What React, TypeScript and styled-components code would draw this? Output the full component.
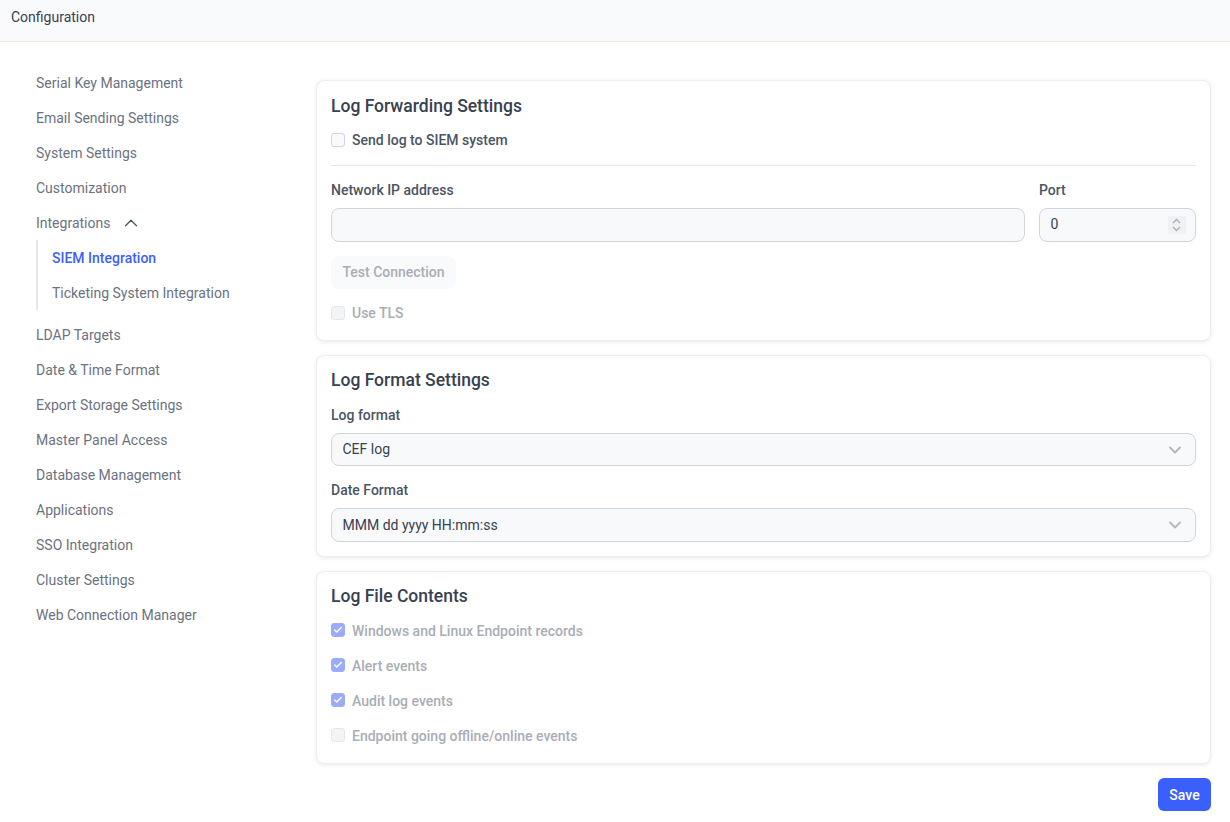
import styled, { createGlobalStyle } from "styled-components";
import { Check, ChevronDown, ChevronUp } from "lucide-react";

const GlobalStyle = createGlobalStyle`
  * {
    box-sizing: border-box;
  }
  html, body {
    margin: 0;
    background: #fff;
    font-family: Roboto, "Liberation Sans", sans-serif;
  }
`;

const Page = styled.div`
  width: 1230px;
  height: 822px;
  overflow: hidden;
`;

const Header = styled.header`
  height: 42px;
  padding: 0 11px 8px;
  display: flex;
  align-items: center;
  background: #f9fafb;
  border-bottom: 1px solid #e5e7eb;
  font-size: 14px;
  color: #374151;
`;

const Body = styled.div`
  display: flex;
`;

const Sidebar = styled.nav`
  width: 316px;
  flex: none;
  padding: 23px 0 0 36px;
`;

const NavItem = styled.div<{ $active?: boolean; $sub?: boolean }>`
  height: 35px;
  display: flex;
  align-items: center;
  gap: 10px;
  font-size: 14px;
  font-weight: ${(p) => (p.$active ? 500 : 400)};
  color: ${(p) => (p.$active ? "#3b5ffb" : "#6b7280")};
  padding-left: ${(p) => (p.$sub ? "14px" : "0")};
`;

const SubMenu = styled.div`
  border-left: 2px solid #e5e7eb;
  margin-bottom: 7px;
`;

const Main = styled.main`
  flex: 1;
  padding: 38px 19px 0 0;
  display: flex;
  flex-direction: column;
  gap: 14px;
`;

const Card = styled.section<{ $height: number; $top?: number }>`
  height: ${(p) => p.$height}px;
  padding: ${(p) => p.$top ?? 12}px 14px 0;
  background: #fff;
  border: 1px solid #eceef1;
  border-radius: 8px;
  box-shadow: 0 1px 4px rgba(0, 0, 0, 0.09);
`;

const Title = styled.h2`
  margin: 0 0 3px;
  height: 25px;
  line-height: 25px;
  font-size: 17.5px;
  font-weight: 500;
  color: #374151;
`;

const CheckRow = styled.label<{ $disabled?: boolean }>`
  height: 35px;
  display: flex;
  align-items: center;
  gap: 7px;
  font-size: 14px;
  font-weight: 500;
  color: ${(p) => (p.$disabled ? "#a9adb6" : "#4b5563")};
`;

const Box = styled.span<{ $checked?: boolean; $disabled?: boolean }>`
  width: 14px;
  height: 14px;
  flex: none;
  display: flex;
  align-items: center;
  justify-content: center;
  border-radius: 3px;
  color: #fff;
  background: ${(p) =>
    p.$checked ? "#9cacfb" : p.$disabled ? "#f3f4f6" : "#f9fafb"};
  border: 1px solid
    ${(p) => (p.$checked ? "#9cacfb" : p.$disabled ? "#e5e7eb" : "#d1d5db")};
`;

const ContentBox = styled(Box)`
  margin-bottom: 2px;
`;

const Divider = styled.hr`
  margin: 8px 0 0;
  border: 0;
  border-top: 1px solid #e5e7eb;
`;

const FieldRow = styled.div`
  display: flex;
  gap: 14px;
  margin-top: 14px;
`;

const Field = styled.div<{ $width?: number; $gap?: number }>`
  flex: ${(p) => (p.$width ? `0 0 ${p.$width}px` : "1")};
  margin-top: ${(p) => p.$gap ?? 0}px;
`;

const Label = styled.div`
  height: 20px;
  line-height: 20px;
  margin-bottom: 8px;
  font-size: 14px;
  font-weight: 500;
  color: #4b5563;
`;

const Control = styled.div<{ $height?: number }>`
  height: ${(p) => p.$height ?? 34}px;
  padding: 0 10.5px;
  display: flex;
  align-items: center;
  justify-content: space-between;
  background: #f8f9fb;
  border: 1px solid #d1d5db;
  border-radius: 8px;
  font-size: 14px;
  color: #374151;
`;

const ControlText = styled.span<{ $lift?: boolean }>`
  margin-bottom: ${(p) => (p.$lift ? "2px" : "0")};
`;

const Stepper = styled.span`
  width: 18px;
  height: 18px;
  margin-right: -1px;
  display: flex;
  flex-direction: column;
  align-items: center;
  justify-content: center;
  background: #f0f1f3;
  color: #a9adb6;
`;

const StepIcon = styled.svg`
  width: 9px;
  height: 6px;
  margin: 1px 0;
`;

const SelectIcon = styled(ChevronDown)`
  color: #b4b8bf;
`;

const TestButton = styled.button`
  display: block;
  width: 125px;
  height: 33px;
  margin: 14px 0 6px;
  padding: 0 0 1px;
  border: 0;
  border-radius: 8px;
  background: #f9fafb;
  font-family: inherit;
  font-size: 14px;
  font-weight: 500;
  color: #a9adb6;
`;

const Rows = styled.div`
  margin-top: 4px;
`;

const Footer = styled.div`
  display: flex;
  justify-content: flex-end;
`;

const SaveButton = styled.button`
  width: 53px;
  height: 33px;
  border: 0;
  border-radius: 6px;
  background: #3b5ffb;
  font-family: inherit;
  font-size: 14px;
  font-weight: 500;
  color: #fff;
`;

const topItems = [
  "Serial Key Management",
  "Email Sending Settings",
  "System Settings",
  "Customization",
];

const bottomItems = [
  "LDAP Targets",
  "Date & Time Format",
  "Export Storage Settings",
  "Master Panel Access",
  "Database Management",
  "Applications",
  "SSO Integration",
  "Cluster Settings",
  "Web Connection Manager",
];

const contents = [
  { text: "Windows and Linux Endpoint records", checked: true },
  { text: "Alert events", checked: true },
  { text: "Audit log events", checked: true },
  { text: "Endpoint going offline/online events", checked: false },
];

export default function App() {
  return (
    <Page>
      <GlobalStyle />
      <Header>Configuration</Header>
      <Body>
        <Sidebar>
          {topItems.map((item) => (
            <NavItem key={item}>{item}</NavItem>
          ))}
          <NavItem>
            Integrations
            <ChevronUp size={22} color="#4b5563" strokeWidth={1.4} />
          </NavItem>
          <SubMenu>
            <NavItem $sub $active>
              SIEM Integration
            </NavItem>
            <NavItem $sub>Ticketing System Integration</NavItem>
          </SubMenu>
          {bottomItems.map((item) => (
            <NavItem key={item}>{item}</NavItem>
          ))}
        </Sidebar>
        <Main>
          <Card $height={261} $top={13}>
            <Title>Log Forwarding Settings</Title>
            <CheckRow>
              <Box />
              Send log to SIEM system
            </CheckRow>
            <Divider />
            <FieldRow>
              <Field>
                <Label>Network IP address</Label>
                <Control />
              </Field>
              <Field $width={157}>
                <Label>Port</Label>
                <Control>
                  <ControlText $lift>0</ControlText>
                  <Stepper>
                    <StepIcon viewBox="0 0 9 6" fill="none" stroke="currentColor" strokeWidth="1.3">
                      <path d="M1 5 L4.5 1.5 L8 5" />
                    </StepIcon>
                    <StepIcon viewBox="0 0 9 6" fill="none" stroke="currentColor" strokeWidth="1.3">
                      <path d="M1 1 L4.5 4.5 L8 1" />
                    </StepIcon>
                  </Stepper>
                </Control>
              </Field>
            </FieldRow>
            <TestButton disabled>Test Connection</TestButton>
            <CheckRow $disabled>
              <Box $disabled />
              Use TLS
            </CheckRow>
          </Card>
          <Card $height={202}>
            <Title>Log Format Settings</Title>
            <Field $gap={12}>
              <Label>Log format</Label>
              <Control $height={33}>
                <ControlText $lift>CEF log</ControlText>
                <SelectIcon size={20} strokeWidth={2.4} />
              </Control>
            </Field>
            <Field $gap={14}>
              <Label>Date Format</Label>
              <Control>
                <ControlText>MMM dd yyyy HH:mm:ss</ControlText>
                <SelectIcon size={20} strokeWidth={2.4} />
              </Control>
            </Field>
          </Card>
          <Card $height={193}>
            <Title>Log File Contents</Title>
            <Rows>
              {contents.map((row) => (
                <CheckRow key={row.text} $disabled>
                  <ContentBox $checked={row.checked} $disabled>
                    {row.checked && <Check size={10} strokeWidth={3.5} />}
                  </ContentBox>
                  {row.text}
                </CheckRow>
              ))}
            </Rows>
          </Card>
          <Footer>
            <SaveButton>Save</SaveButton>
          </Footer>
        </Main>
      </Body>
    </Page>
  );
}
